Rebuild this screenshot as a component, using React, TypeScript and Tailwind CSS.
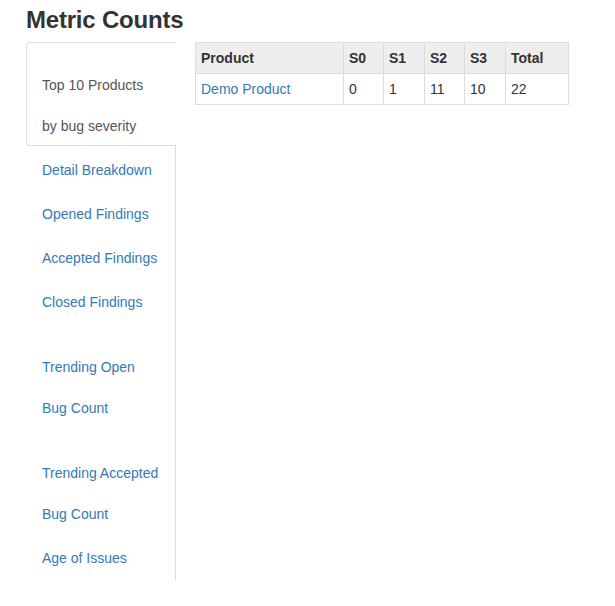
import React from "react";

const cols = [
  { h: "Product", w: "w-[148px]" },
  { h: "S0", w: "w-[40px]" },
  { h: "S1", w: "w-[41px]" },
  { h: "S2", w: "w-[40px]" },
  { h: "S3", w: "w-[41px]" },
  { h: "Total", w: "w-[63px]" },
];
const row = ["Demo Product", "0", "1", "11", "10", "22"];

export default function App() {
  return (
    <div
      className="w-[615px] h-[606px] bg-white text-[#333333] text-[14px] leading-[20px]"
      style={{ fontFamily: '"Liberation Sans", Arial, sans-serif' }}
    >
      <h1 className="pt-[7px] pl-[26px] text-[24px] leading-[26px] font-bold m-0 tracking-[-0.2px]">Metric Counts</h1>
      <div className="flex mt-[9px] pl-[26px]">
        <div className="w-[150px] h-[538px] border-r border-[#dddddd] flex flex-col">
          <div className="relative z-10 -mr-px bg-white text-[#555555] border border-r-0 border-[#dddddd] rounded-l-[4px] pl-[15px] pt-[32px] pb-[9px]">
            <div>Top 10 Products</div>
            <div className="mt-[21px]">by bug severity</div>
          </div>
          <div className="mt-[2px] text-[#337ab7]">
            <div className="pl-[16px] py-[12px]">Detail Breakdown</div>
            <div className="pl-[16px] py-[12px]">Opened Findings</div>
            <div className="pl-[16px] py-[12px]">Accepted Findings</div>
            <div className="pl-[16px] py-[12px]">Closed Findings</div>
            <div className="pl-[16px] pt-[33px] pb-[12px]">
              <div>Trending Open</div>
              <div className="mt-[21px]">Bug Count</div>
            </div>
            <div className="pl-[16px] pt-[33px] pb-[12px]">
              <div>Trending Accepted</div>
              <div className="mt-[21px]">Bug Count</div>
            </div>
            <div className="pl-[16px] py-[12px]">Age of Issues</div>
          </div>
        </div>
        <div className="ml-[19px] self-start border-l border-t border-[#dddddd]">
          <div className="flex bg-[#eeeeee] font-bold text-[#333333]">
            {cols.map((c) => (
              <div key={c.h} className={`${c.w} p-[5px] border-r border-b border-[#dddddd]`}>
                {c.h}
              </div>
            ))}
          </div>
          <div className="flex">
            {cols.map((c, i) => (
              <div
                key={c.h}
                className={`${c.w} p-[5px] border-r border-b border-[#dddddd] ${i === 0 ? "text-[#337ab7]" : ""}`}
              >
                {row[i]}
              </div>
            ))}
          </div>
        </div>
      </div>
    </div>
  );
}
